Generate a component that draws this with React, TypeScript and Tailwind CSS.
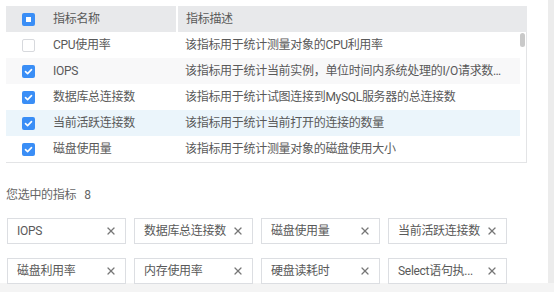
import { X } from 'lucide-react';

const rows = [
  { name: 'CPU使用率', desc: '该指标用于统计测量对象的CPU利用率', checked: false, bg: '' },
  { name: 'IOPS', desc: '该指标用于统计当前实例，单位时间内系统处理的I/O请求数量，即每秒处理的I/O请求数量', checked: true, bg: 'bg-[#f8f8f9]' },
  { name: '数据库总连接数', desc: '该指标用于统计试图连接到MySQL服务器的总连接数', checked: true, bg: '' },
  { name: '当前活跃连接数', desc: '该指标用于统计当前打开的连接的数量', checked: true, bg: 'bg-[#ebf5fb]' },
  { name: '磁盘使用量', desc: '该指标用于统计测量对象的磁盘使用大小', checked: true, bg: '' },
];

const tags = ['IOPS', '数据库总连接数', '磁盘使用量', '当前活跃连接数', '磁盘利用率', '内存使用率', '硬盘读耗时', 'Select语句执...'];

function Checkbox({ state }: { state: 'on' | 'off' | 'some' }) {
  if (state === 'off') {
    return <div className="w-[13px] h-[13px] rounded-[2px] border border-[#d7d9dd] bg-white" />;
  }
  return (
    <div className="w-[13px] h-[13px] rounded-[2px] bg-[#3a8ef6] flex items-center justify-center">
      {state === 'some' ? (
        <div className="w-[5px] h-[5px] bg-white" />
      ) : (
        <svg width="9" height="9" viewBox="0 0 9 9">
          <path d="M1.5 4.6 L3.6 6.6 L7.5 2.6" stroke="white" strokeWidth="1.6" fill="none" strokeLinecap="round" strokeLinejoin="round" />
        </svg>
      )}
    </div>
  );
}

export default function App() {
  return (
    <div className="w-[554px] h-[292px] overflow-hidden bg-white text-[12px] tracking-[-0.3px] text-[#595959] font-['Roboto','Noto_Sans_CJK_SC',sans-serif]">
      <div className="flex h-[283px]">
        <div className="flex-1 pl-[6px] pt-[6px]">
          <div className="w-[521px]">
            <div className="grid grid-cols-[39px_131px_1fr] h-[26px] bg-[#e8e9eb]">
              <div className="flex items-center pl-[16px]">
                <Checkbox state="some" />
              </div>
              <div className="flex items-center pl-2">指标名称</div>
              <div className="flex items-center pl-[8px] border-l-2 border-white">指标描述</div>
            </div>
            <div className="flex border-r border-b border-[#e3e4e6]">
              <div className="w-[514px]">
                {rows.map((r) => (
                  <div key={r.name} className={`grid grid-cols-[39px_131px_1fr] h-[26px] ${r.bg}`}>
                    <div className="flex items-center pl-[16px]">
                      <Checkbox state={r.checked ? 'on' : 'off'} />
                    </div>
                    <div className="flex items-center pl-2">{r.name}</div>
                    <div className="flex items-center pl-[9px] pr-[8px] min-w-0">
                      <span className="truncate">{r.desc}</span>
                    </div>
                  </div>
                ))}
              </div>
              <div className="w-[6px] pt-[1px]">
                <div className="w-[5px] h-[14px] rounded-full bg-[#c9c9c9]" />
              </div>
            </div>
          </div>
          <div className="mt-[23px] text-[#666]">
            您选中的指标<span className="ml-[8px]">8</span>
          </div>
          <div className="mt-[14px] grid grid-cols-[repeat(4,119px)] gap-x-[8px] gap-y-[14px] pl-[1px]">
            {tags.map((t) => (
              <div key={t} className="h-[26px] border border-[#dcdee2] flex items-center justify-between pl-[9px] pr-[8px] whitespace-nowrap">
                <span>{t}</span>
                <X size={12} strokeWidth={2.5} className="text-[#777]" />
              </div>
            ))}
          </div>
        </div>
        <div className="w-[6px] bg-[#ececec]" />
      </div>
      <div className="h-[9px] bg-[#f4f4f4]" />
    </div>
  );
}
